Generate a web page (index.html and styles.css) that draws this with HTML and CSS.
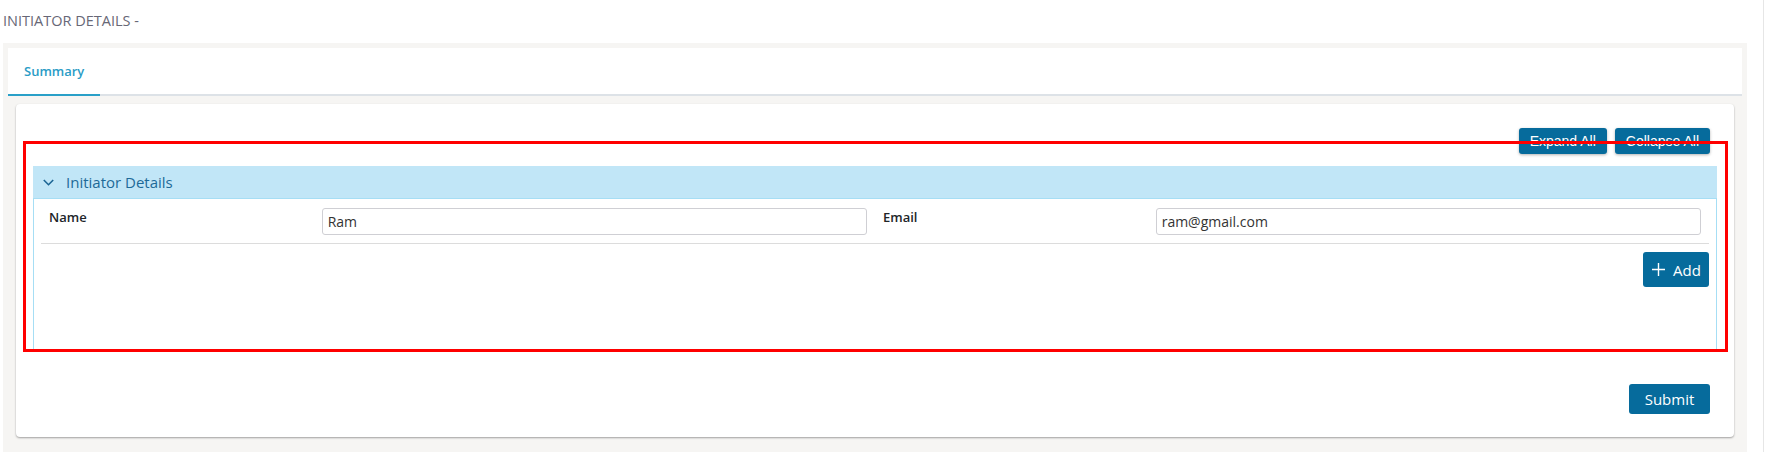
FILE: index.html
```html
<!DOCTYPE html>
<html lang="en">
<head>
<meta charset="utf-8">
<title>Initiator Details</title>
<link rel="stylesheet" href="styles.css">
</head>
<body>
<div class="app">
  <div class="page-title">INITIATOR DETAILS -</div>
  <div class="shell">
    <div class="tabs">
      <div class="tab active">Summary</div>
    </div>
    <div class="card">
      <div class="toolbar">
        <button class="btn btn-sm">Expand All</button>
        <button class="btn btn-sm">Collapse All</button>
      </div>
      <div class="accordion">
        <div class="acc-header">
          <svg class="chev" width="11" height="7" viewBox="0 0 11 7"><path d="M0.8 1 L5.5 5.7 L10.2 1" fill="none" stroke="#1b6594" stroke-width="1.6"/></svg>
          <span class="acc-title">Initiator Details</span>
        </div>
        <div class="acc-body">
          <div class="row">
            <div class="field">
              <label class="lbl">Name</label>
              <input class="inp" type="text" value="Ram">
            </div>
            <div class="field">
              <label class="lbl">Email</label>
              <input class="inp" type="text" value="ram@gmail.com">
            </div>
          </div>
          <div class="divider"></div>
          <div class="add-row">
            <button class="btn btn-add">
              <svg width="13" height="13" viewBox="0 0 13 13"><path d="M6.5 0 V13 M0 6.5 H13" stroke="#fff" stroke-width="1.4"/></svg>
              <span>Add</span>
            </button>
          </div>
        </div>
      </div>
      <div class="footer">
        <button class="btn btn-submit">Submit</button>
      </div>
    </div>
  </div>
</div>
<div class="highlight"></div>
</body>
</html>
```

FILE: styles.css
```css
* { box-sizing: border-box; }
html, body { margin: 0; padding: 0; background: #fff; }
body {
  font-family: "Open Sans", "Liberation Sans", sans-serif;
  color: #333;
  width: 1770px;
  height: 452px;
  overflow: hidden;
}
.app {
  width: 1764px;
  height: 452px;
  border-right: 1px solid #e6e6e6;
}
.page-title {
  height: 43px;
  padding: 11px 0 0 3px;
  font-size: 14.5px;
  line-height: 20px;
  color: #676776;
}
.shell {
  margin-left: 3px;
  width: 1744px;
  height: 409px;
  background: #f6f5f3;
  padding: 5px 5px 0 5px;
}
.tabs {
  display: flex;
  background: #fff;
  border-bottom: 2px solid #dde2e7;
}
.tab {
  padding: 0 16px;
  line-height: 46px;
  font-size: 13px;
  font-weight: 600;
  color: #2a9cc6;
  border-bottom: 2px solid #2aa0c8;
  margin-bottom: -2px;
}
.card {
  margin: 8px 8px 0 8px;
  background: #fff;
  border-radius: 4px;
  box-shadow: 0 1px 2px rgba(0,0,0,0.35);
  padding: 24px 17px 23px 17px;
}
.toolbar {
  display: flex;
  justify-content: flex-end;
  gap: 8px;
  padding-right: 7px;
  margin-bottom: 12px;
}
.btn {
  border: 0;
  background: #066b9c;
  color: #fff;
  border-radius: 3px;
  cursor: pointer;
  font-family: "Open Sans", sans-serif;
}
.btn-sm {
  height: 26px;
  padding: 0 11px;
  font-family: "Liberation Sans", Arial, sans-serif;
  font-size: 14px;
  box-shadow: 0 1px 3px rgba(0,0,0,0.3);
}
.acc-header {
  height: 32px;
  background: #c1e6f7;
  display: flex;
  align-items: center;
  padding-left: 10px;
  gap: 12px;
}
.chev { display: block; }
.acc-title {
  font-size: 15px;
  color: #1d6a98;
}
.acc-body {
  border: 1px solid #a6def5;
  padding: 9px 7px 62px 7px;
}
.row {
  display: grid;
  grid-template-columns: 1fr 1fr;
}
.field {
  display: grid;
  grid-template-columns: 1fr 2fr;
  padding: 0 8px;
}
.lbl {
  font-size: 13px;
  font-weight: 600;
  line-height: 18px;
  color: #212529;
}
.inp {
  height: 27px;
  width: 100%;
  border: 1px solid #cfcfd4;
  border-radius: 3px;
  padding: 0 5px;
  font-family: "Open Sans", sans-serif;
  font-size: 14px;
  color: #333;
  outline: none;
}
.divider {
  height: 1px;
  background: #dcdcdc;
  margin-top: 8px;
}
.add-row {
  display: flex;
  justify-content: flex-end;
  margin-top: 8px;
}
.btn-add {
  height: 35px;
  width: 66px;
  display: flex;
  align-items: center;
  gap: 8px;
  padding: 0 0 0 9px;
  font-size: 15px;
}
.btn-add svg { display: block; }
.footer {
  display: flex;
  justify-content: flex-end;
  padding-right: 7px;
  margin-top: 34px;
}
.btn-submit {
  height: 30px;
  width: 81px;
  font-size: 15px;
  padding: 0;
}
.highlight {
  position: absolute;
  left: 23px;
  top: 141px;
  width: 1705px;
  height: 211px;
  border: 3px solid #ff0000;
  pointer-events: none;
}
```
